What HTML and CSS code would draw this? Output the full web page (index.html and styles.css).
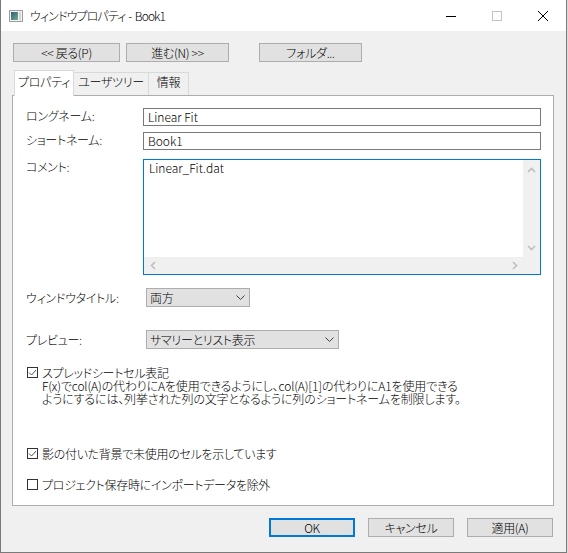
FILE: index.html
```html
<!DOCTYPE html>
<html lang="ja">
  <head>
    <meta charset="UTF-8" />
    <title>ウィンドウプロパティ - Book1</title>
    <link rel="stylesheet" href="styles.css">
  </head>

  <body>
    <div class="window">
      <header class="titlebar">
        <svg class="app-icon" width="14" height="12" viewBox="0 0 14 12">
          <defs>
            <linearGradient id="appGrad" x1="0" y1="0" x2="1" y2="1">
              <stop offset="0" stop-color="#2f5f78" />
              <stop offset="1" stop-color="#6fae8c" />
            </linearGradient>
          </defs>
          <rect x="0.5" y="0.5" width="13" height="11" fill="#f4f4f4" stroke="#9c9c9c" />
          <rect x="2" y="2" width="7" height="8" fill="url(#appGrad)" />
          <rect x="10" y="2" width="2" height="8" fill="#d6d6d6" />
        </svg>
        <span class="title">ウィンドウプロパティ<span class="title-sep"> - </span>Book1</span>
        <div class="caption">
          <span class="cap-btn">
            <svg width="10" height="10" viewBox="0 0 10 10"><path d="M0 5.5h10" stroke="#000" /></svg>
          </span>
          <span class="cap-btn">
            <svg width="10" height="10" viewBox="0 0 10 10"><rect x="0.5" y="0.5" width="9" height="9" fill="none" stroke="#c4c4c4" /></svg>
          </span>
          <span class="cap-btn">
            <svg width="10" height="10" viewBox="0 0 10 10"><path d="M0 0l10 10M10 0L0 10" stroke="#000" /></svg>
          </span>
        </div>
      </header>

      <div class="client">
        <div class="nav-row">
          <button class="btn btn-back">&lt;&lt; 戻る(P)</button>
          <button class="btn btn-next">進む(N) &gt;&gt;</button>
          <button class="btn btn-folder">フォルダ...</button>
        </div>

        <div class="tabs">
          <div class="tab active">プロパティ</div>
          <div class="tab tab-tree">ユーザツリー</div>
          <div class="tab tab-info">情報</div>
        </div>

        <div class="panel">
          <div class="field-row">
            <span class="field-label">ロングネーム:</span>
            <div class="edit">Linear Fit</div>
          </div>

          <div class="field-row row-short">
            <span class="field-label">ショートネーム:</span>
            <div class="edit">Book1</div>
          </div>

          <div class="field-row row-comment">
            <span class="field-label">コメント:</span>
            <div class="memo">
              <div class="memo-text">Linear_Fit.dat</div>
              <div class="vscroll">
                <svg width="9" height="6" viewBox="0 0 9 6"><path d="M1 5l3.5-3.5L8 5" fill="none" stroke="#bfbfbf" stroke-width="1.6" /></svg>
                <svg width="9" height="6" viewBox="0 0 9 6"><path d="M1 1l3.5 3.5L8 1" fill="none" stroke="#bfbfbf" stroke-width="1.6" /></svg>
              </div>
              <div class="hscroll">
                <svg width="6" height="9" viewBox="0 0 6 9"><path d="M5 1L1.5 4.5 5 8" fill="none" stroke="#bfbfbf" stroke-width="1.6" /></svg>
                <svg width="6" height="9" viewBox="0 0 6 9"><path d="M1 1l3.5 3.5L1 8" fill="none" stroke="#bfbfbf" stroke-width="1.6" /></svg>
              </div>
              <div class="corner"></div>
            </div>
          </div>

          <div class="field-row combo-row row-wintitle">
            <span class="field-label">ウィンドウタイトル:</span>
            <div class="combo combo-short">
              <span>両方</span>
              <svg width="9" height="5" viewBox="0 0 9 5"><path d="M0.5 0.5l4 4 4-4" fill="none" stroke="#404040" /></svg>
            </div>
          </div>

          <div class="field-row combo-row row-preview">
            <span class="field-label">プレビュー:</span>
            <div class="combo combo-long">
              <span>サマリーとリスト表示</span>
              <svg width="9" height="5" viewBox="0 0 9 5"><path d="M0.5 0.5l4 4 4-4" fill="none" stroke="#404040" /></svg>
            </div>
          </div>

          <div class="check-row row-cellnotation">
            <svg class="checkbox" width="11" height="11" viewBox="0 0 11 11">
              <rect x="0.5" y="0.5" width="10" height="10" fill="#fff" stroke="#333" />
              <path d="M2 5.5l2.5 2.5L9 3" fill="none" stroke="#555" />
            </svg>
            <div class="check-text">
              <div>スプレッドシートセル表記</div>
              <div class="desc">F(x)でcol(A)の代わりにAを使用できるようにし、col(A)[1]の代わりにA1を使用できる</div>
              <div class="desc">ようにするには、列挙された列の文字となるように列のショートネームを制限します。</div>
            </div>
          </div>

          <div class="check-row row-shade">
            <svg class="checkbox" width="11" height="11" viewBox="0 0 11 11">
              <rect x="0.5" y="0.5" width="10" height="10" fill="#fff" stroke="#333" />
              <path d="M2 5.5l2.5 2.5L9 3" fill="none" stroke="#555" />
            </svg>
            <div class="check-text">影の付いた背景で未使用のセルを示しています</div>
          </div>

          <div class="check-row row-exclude">
            <svg class="checkbox" width="11" height="11" viewBox="0 0 11 11">
              <rect x="0.5" y="0.5" width="10" height="10" fill="#fff" stroke="#333" />
            </svg>
            <div class="check-text">プロジェクト保存時にインポートデータを除外</div>
          </div>
        </div>

        <div class="footer">
          <button class="btn btn-dialog btn-default">OK</button>
          <button class="btn btn-dialog">キャンセル</button>
          <button class="btn btn-dialog">適用(A)</button>
        </div>
      </div>
    </div>
  </body>
</html>
```

FILE: styles.css
```css
* {
  box-sizing: border-box;
  margin: 0;
  padding: 0;
}

body {
  font-family: "Noto Sans CJK JP", sans-serif;
  font-size: 12px;
  font-weight: 300;
  line-height: 16px;
  letter-spacing: -0.3px;
  font-feature-settings: "palt";
  color: #000;
  background: #dcdcdc;
  width: 568px;
  height: 553px;
  overflow: hidden;
}

/* Window frame */
.window {
  width: 567px;
  height: 553px;
  border: 1px solid #7a7a7a;
  border-top: none;
  background: #f0f0f0;
  display: flex;
  flex-direction: column;
}

.titlebar {
  height: 31px;
  background: #fff;
  display: flex;
  align-items: center;
  flex-shrink: 0;
}

.app-icon {
  margin-left: 8px;
}

.title {
  margin-left: 7px;
  letter-spacing: -0.9px;
}

.title-sep {
  letter-spacing: 0;
}

.caption {
  margin-left: auto;
  height: 100%;
  display: flex;
}

.cap-btn {
  width: 46px;
  display: flex;
  align-items: center;
  justify-content: center;
}

/* Buttons */
.btn {
  font: inherit;
  letter-spacing: inherit;
  color: #000;
  height: 19px;
  background: #e1e1e1;
  border: 1px solid #adadad;
  line-height: 16px;
  display: flex;
  align-items: center;
  justify-content: center;
}

.nav-row {
  display: flex;
  margin: 12px 0 0 12px;
}

.btn-back {
  width: 107px;
}

.btn-next {
  width: 103px;
  margin-left: 6px;
}

.btn-folder {
  width: 103px;
  margin-left: 30px;
}

/* Tabs */
.tabs {
  display: flex;
  align-items: flex-end;
  height: 25px;
  margin: 8px 0 0 13px;
  position: relative;
  z-index: 1;
}

.tab {
  height: 23px;
  padding-top: 1px;
  text-align: center;
  background: #f0f0f0;
  border-top: 1px solid #d9d9d9;
  border-right: 1px solid #d9d9d9;
}

.tab.active {
  width: 60px;
  height: 26px;
  margin-bottom: -1px;
  padding-top: 3px;
  background: #fff;
  border: 1px solid #d9d9d9;
  border-bottom: none;
}

.tab-tree {
  width: 75px;
}

.tab-info {
  width: 40px;
}

/* Property page */
.panel {
  margin-left: 11px;
  width: 542px;
  height: 411px;
  background: #fff;
  border: 1px solid #adadad;
  padding: 12px 12px 0 13px;
}

.field-row {
  display: flex;
}

.field-label {
  width: 117px;
  flex-shrink: 0;
}

.row-short {
  margin-top: 6px;
}

.row-comment {
  margin-top: 9px;
}

.edit {
  flex: 1;
  height: 18px;
  border: 1px solid #7a7a7a;
  padding-left: 4px;
  letter-spacing: 0;
}

.memo {
  flex: 1;
  height: 116px;
  border: 1px solid #0078d7;
  display: grid;
  grid-template-columns: 1fr 17px;
  grid-template-rows: 1fr 17px;
}

.memo-text {
  padding: 0 0 0 5px;
  letter-spacing: 0;
}

.vscroll {
  background: #f0f0f0;
  display: flex;
  flex-direction: column;
  justify-content: space-between;
  align-items: center;
  padding: 7px 0 6px;
}

.hscroll {
  background: #f0f0f0;
  display: flex;
  justify-content: space-between;
  align-items: center;
  padding: 0 5px 0 6px;
}

.corner {
  background: #f0f0f0;
}

.combo-row {
  align-items: center;
}

.row-wintitle {
  margin-top: 13px;
}

.row-preview {
  margin-top: 23px;
}

.combo {
  height: 19px;
  margin-left: 3px;
  background: #e1e1e1;
  border: 1px solid #adadad;
  display: flex;
  align-items: center;
  justify-content: space-between;
  padding: 0 4px 0 3px;
}

.combo-short {
  width: 104px;
}

.combo-long {
  width: 193px;
}

/* Check boxes */
.check-row {
  display: flex;
  align-items: flex-start;
  line-height: 13px;
}

.checkbox {
  margin: 1px 4px 0 1px;
  flex-shrink: 0;
}

.check-text .desc {
  letter-spacing: -0.15px;
}

.row-cellnotation {
  margin-top: 17px;
}

.row-shade {
  margin-top: 42px;
}

.row-exclude {
  margin-top: 18px;
}

/* Dialog buttons */
.footer {
  display: flex;
  justify-content: flex-end;
  gap: 13px;
  margin-top: 12px;
  padding-right: 13px;
}

.btn-dialog {
  width: 86px;
}

.btn-default {
  border: 2px solid #0078d7;
}
```
